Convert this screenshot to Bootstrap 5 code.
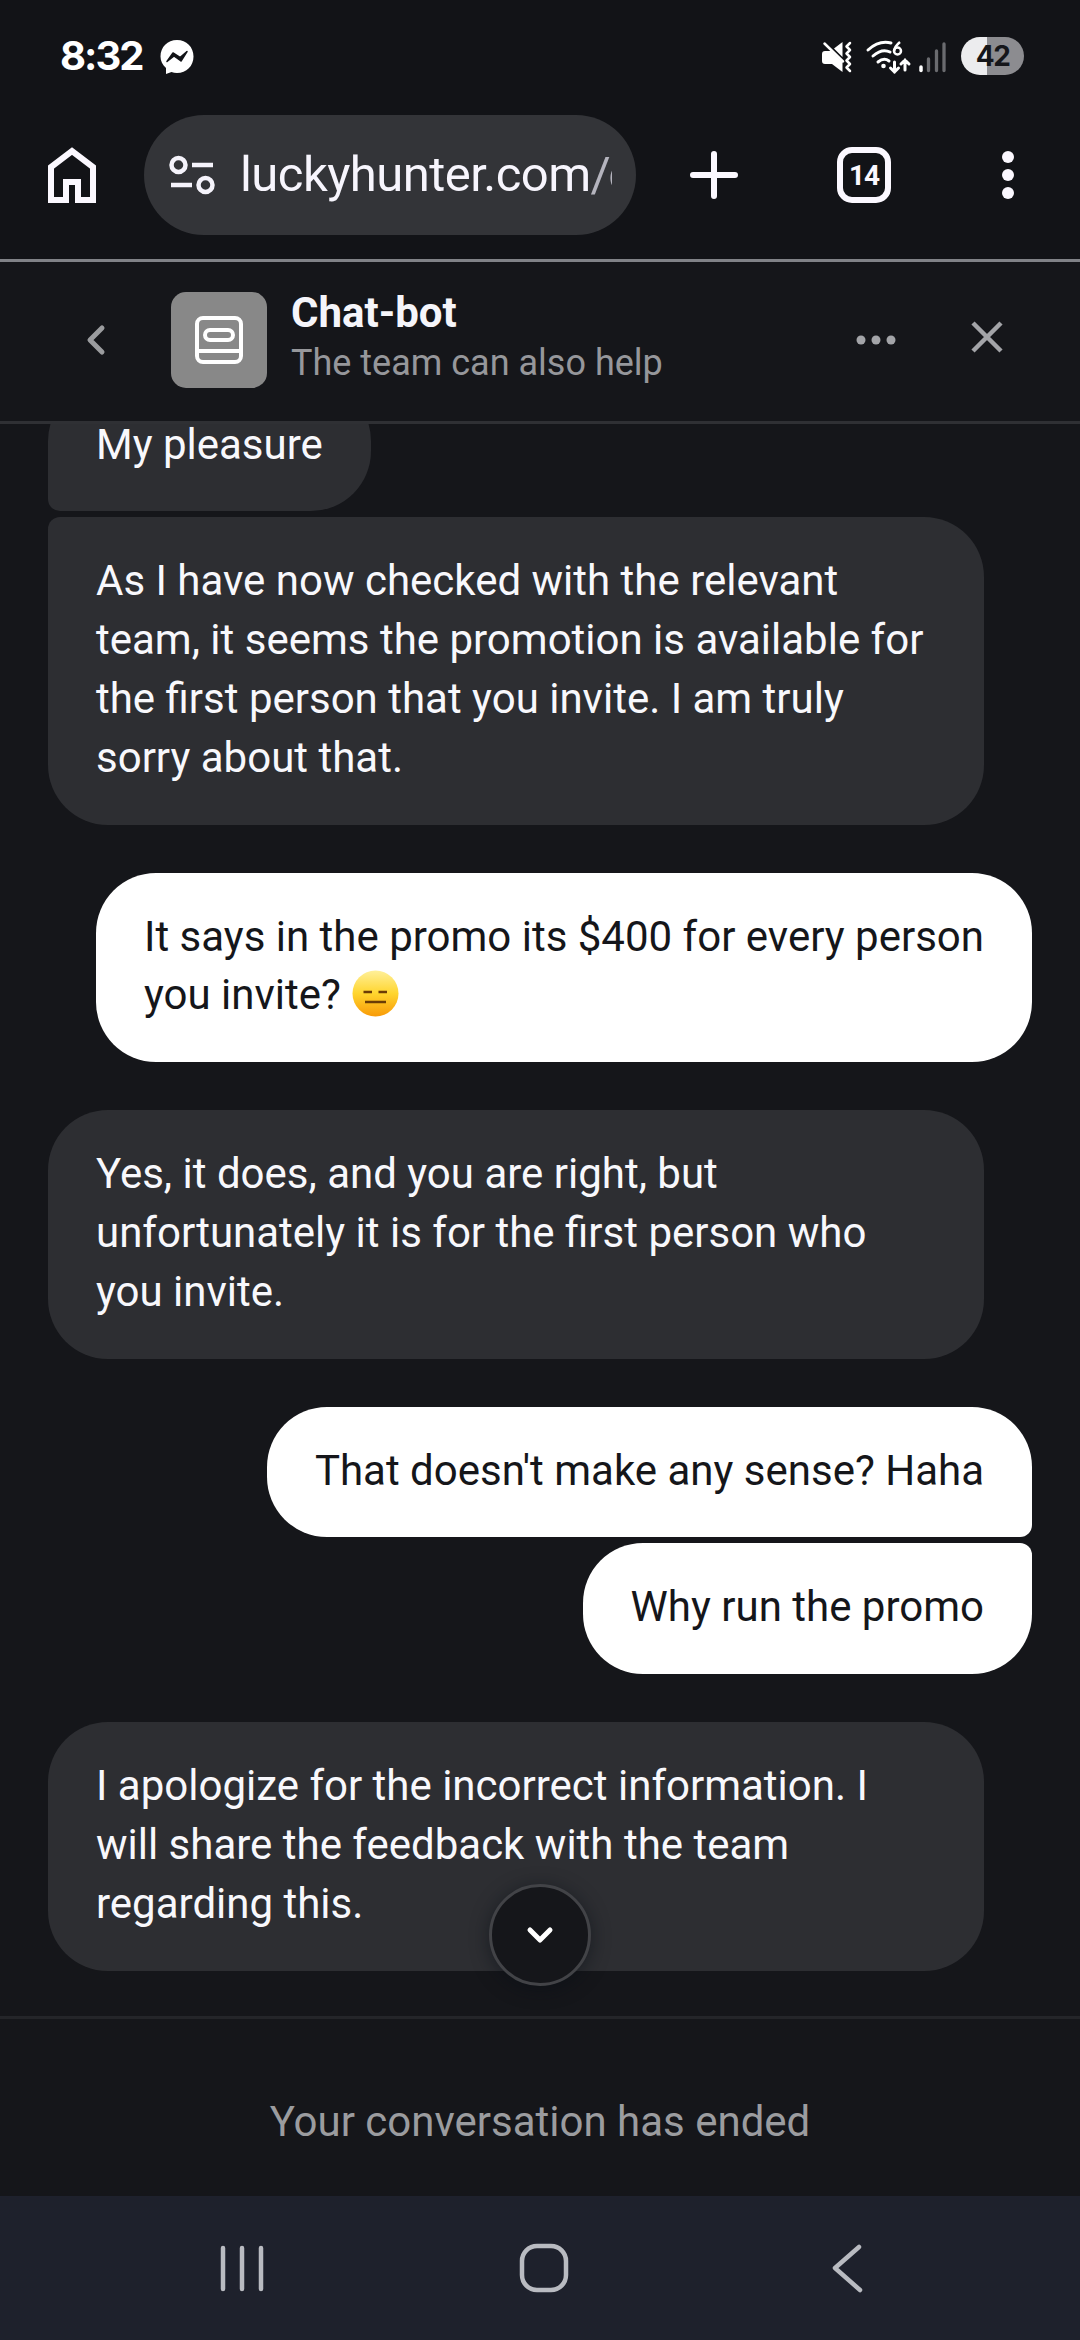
<!DOCTYPE html>
<html lang="en">
<head>
<meta charset="utf-8">
<meta name="viewport" content="width=device-width, initial-scale=1">
<title>Chat-bot</title>
<link href="https://cdn.jsdelivr.net/npm/bootstrap@5.3.0/dist/css/bootstrap.min.css" rel="stylesheet">
<style>
body{width:1080px;height:2340px;background:#121317;color:#fff;font-family:Roboto,sans-serif;overflow:hidden}
svg{display:block;flex:none;fill:none;overflow:visible}
.status-row{height:115px;padding:0 56px 0 60px}
.clock{font:700 40px/56px Inter,sans-serif;letter-spacing:-2px;width:83px;height:56px;margin-top:28px}
.messenger{margin:40px 0 0 17px}
.sys-icons{margin-top:37px}
.battery{width:63px;height:38px;margin-left:13px;border-radius:19px;background:linear-gradient(90deg,#ececee 26px,#8c8c90 26px);color:#15161a;font:700 28px/39px Inter,sans-serif;letter-spacing:-1.5px}
.browser-row{height:147px;border-bottom:3px solid #808287;padding:0 60px 24px 48px}
.omnibox{width:492px;height:120px;border-radius:60px;background:#333438;margin-left:48px;padding-left:25px}
.url-text{font-size:49px;line-height:64px;letter-spacing:-.55px;width:372px;margin-left:25px;white-space:nowrap;color:#f7f5fd}
.url-path{color:#b5b4be;letter-spacing:-2.5px}
.plus-icon{margin-left:54px}
.tab-count{width:54px;height:56px;margin-left:99px;border:6px solid #fbf8ff;border-radius:15px;font:700 28px/45px Roboto,sans-serif;letter-spacing:-1px;color:#fbf8ff}
.chat-head{height:162px;padding-bottom:3px;border-bottom:3px solid #2f3034;background:#15161a}
.back-icon{margin-left:86px}
.avatar-box{width:96px;height:96px;margin-left:65px;border-radius:15px;background:#888}
.head-text{margin:-4px 0 0 24px}
.bot-name{font-weight:700;font-size:42px;line-height:50px;color:#f5f5fa}
.bot-sub{font-size:36px;line-height:50px;color:#96979b}
.close-icon{margin:-6px 77px 0 75px}
.thread{height:1592px;background:#15161a;padding:0 48px 45.5px;overflow:hidden}
.bubble{font-size:42px;line-height:58.8px;padding:35px 48px 37px;border-radius:60px;max-width:936px;flex:none}
.from-bot{background:#2d2e32;color:#f8f8fc;align-self:flex-start}
.from-me{background:#fff;color:#15161a;align-self:flex-end}
.gap-s{margin-top:6px}
.gap-l{margin-top:48px}
.tail-bl{border-bottom-left-radius:12px}
.tail-tl{border-top-left-radius:12px}
.tail-br{border-bottom-right-radius:12px}
.tail-tr{border-top-right-radius:12px}
.emoji{vertical-align:-8px;margin-left:1px}
.to-bottom{left:489px;bottom:30px;width:102px;height:102px;border:3px solid #424347;background:#15161a;box-shadow:0 3px 18px rgba(10,14,22,.55)}
.ended{height:180px;border-top:3px solid #242529;background:#15161a;color:#9b9c9f;font-size:42px;line-height:59px;padding-top:73px}
.sys-nav{height:144px;background:#1e212c}
</style>
</head>
<body class="d-flex flex-column">
<header>
  <div class="status-row d-flex align-items-start">
    <div class="clock">8:32</div>
    <svg class="messenger" width="34" height="34" viewBox="0 0 34 34"><path fill="#fff" d="M17 0C26.500 0 33.500 7 33.500 16.500S26.500 33 17 33q-3-.1-5.500-.9L6 34V28C2.500 25 .5 21 .5 16.500.5 7 7.500 0 17 0Z"/><path d="m7 21.500 6-8.500 7 4.500 7-6-6 9.500-7-5Z" fill="#121317" stroke="#121317" stroke-width="1.500" stroke-linejoin="round"/></svg>
    <div class="sys-icons d-flex ms-auto">
      <svg width="126" height="38" viewBox="0 0 126 38">
        <path fill="#fff" d="M0 17q0-3 3-3h6l11.500 11v10L10 27H3q-3 0-3-3ZM20.500 5v15L12 11.500Z"/>
        <path d="m2.500 6.500 18.500 18" stroke="#fff" stroke-width="2.500" stroke-linecap="round"/>
        <path d="m28 6-3.500 3.500L28 13l-3.500 3.500L28 20l-3.500 3.500L28 27l-3.500 3.500L28 34" stroke="#fff" stroke-width="2.500" stroke-linecap="round" stroke-linejoin="round"/>
        <g stroke="#fff" stroke-width="3" stroke-linecap="round"><path d="M46 13q11-10 23-7M51 19q9-8 17-4M56 25q6-5 11-1"/><path d="M72.500 25v10m-4-4 4 4 4-4M83 33V23m-4 4 4-4 4 4"/></g>
        <circle cx="61.500" cy="29" r="2.300" fill="#fff"/>
        <path d="M78 5q-5 4-6 9" stroke="#fff" stroke-width="2.500"/><circle cx="75.500" cy="14" r="3.500" stroke="#fff" stroke-width="2.500"/>
        <path d="M99 30v3.500" stroke="#fff" stroke-width="3.500" stroke-linecap="round"/><path d="M106.500 22v11.500M114.500 14v19.500M122 7v26.500" stroke="#6a6b6f" stroke-width="3.300" stroke-linecap="round"/>
      </svg>
      <div class="battery text-center">42</div>
    </div>
  </div>
  <div class="browser-row d-flex align-items-center">
    <svg width="48" height="56" viewBox="0 0 48 56"><path d="M3 53V20L24 4l21 16v33H30V35H18v18Z" stroke="#fbf8ff" stroke-width="6"/></svg>
    <div class="omnibox d-flex align-items-center">
      <svg width="46" height="38" viewBox="0 0 46 38"><g stroke="#f5f3fb" stroke-width="4.500"><circle cx="9.500" cy="9" r="7"/><circle cx="36.500" cy="29" r="7"/><path d="M23 9h21M2 29h21"/></g></svg>
      <div class="url-text overflow-hidden">luckyhunter.com<span class="url-path">/c</span></div>
    </div>
    <svg class="plus-icon" width="48" height="50" viewBox="0 0 48 50"><path d="M24 4v42M3 25h42" stroke="#fbf8ff" stroke-width="6" stroke-linecap="round"/></svg>
    <div class="tab-count text-center">14</div>
    <svg class="ms-auto" width="24" height="48" viewBox="0 0 24 48"><g fill="#fbf8ff"><circle cx="12" cy="6" r="6"/><circle cx="12" cy="24" r="6"/><circle cx="12" cy="42" r="6"/></g></svg>
  </div>
</header>
<section class="chat-head d-flex align-items-center">
  <svg class="back-icon" width="20" height="30" viewBox="0 0 20 30"><path d="M16 3 4 15l12 12" stroke="#9b9c9f" stroke-width="5" stroke-linecap="round" stroke-linejoin="round"/></svg>
  <div class="avatar-box d-flex align-items-center justify-content-center"><svg width="48" height="48" viewBox="0 0 48 48"><g stroke="#fff" stroke-width="4"><rect x="2" y="2" width="44" height="44" rx="6"/><path d="M2 35h44"/><rect x="10" y="14" width="28" height="10" rx="5"/></g></svg></div>
  <div class="head-text"><div class="bot-name">Chat-bot</div><div class="bot-sub">The team can also help</div></div>
  <svg class="ms-auto" width="40" height="10" viewBox="0 0 40 10"><g fill="#a3a4a8"><circle cx="5" cy="5" r="4.500"/><circle cx="20" cy="5" r="4.500"/><circle cx="35" cy="5" r="4.500"/></g></svg>
  <svg class="close-icon" width="32" height="32" viewBox="0 0 32 32"><path d="m2 2 28 28M30 2 2 30" stroke="#a3a4a8" stroke-width="4.500"/></svg>
</section>
<main class="thread d-flex flex-column justify-content-end position-relative">
  <div class="bubble from-bot tail-bl">My pleasure</div>
  <div class="bubble from-bot gap-s tail-tl">As I have now checked with the relevant team, it seems the promotion is available for the first person that you invite. I am truly sorry about that.</div>
  <div class="bubble from-me gap-l">It says in the promo its $400 for every person you invite? <svg class="emoji d-inline-block" width="47" height="47" viewBox="0 0 47 47"><defs><linearGradient id="face" x2="0" y2="1"><stop stop-color="#fff09a"/><stop offset=".5" stop-color="#ffd52e"/><stop offset="1" stop-color="#f89a08"/></linearGradient></defs><circle cx="23.500" cy="23.500" r="23" fill="url(#face)"/><path d="M11.500 22H20M26.500 22H35M13 32h21" stroke="#6b3c05" stroke-width="2.500"/></svg></div>
  <div class="bubble from-bot gap-l">Yes, it does, and you are right, but unfortunately it is for the first person who you invite.</div>
  <div class="bubble from-me gap-l tail-br">That doesn't make any sense? Haha</div>
  <div class="bubble from-me gap-s tail-tr">Why run the promo</div>
  <div class="bubble from-bot gap-l">I apologize for the incorrect information. I will share the feedback with the team regarding this.</div>
  <div class="to-bottom rounded-circle position-absolute d-flex align-items-center justify-content-center"><svg width="26" height="16" viewBox="0 0 26 16"><path d="m3 3 10 10L23 3" stroke="#fff" stroke-width="5" stroke-linecap="round" stroke-linejoin="round"/></svg></div>
</main>
<section class="ended text-center">Your conversation has ended</section>
<nav class="sys-nav">
  <svg width="1080" height="144" viewBox="0 0 1080 144"><g stroke="#b9bbc1" stroke-width="4.500" stroke-linecap="round" stroke-linejoin="round"><path d="M223 52v41M242 52v41M261 52v41M859 51l-24 21 25 22"/><rect x="522" y="50" width="44" height="44" rx="15"/></g></svg>
</nav>
<script src="https://cdn.jsdelivr.net/npm/bootstrap@5.3.0/dist/js/bootstrap.bundle.min.js"></script>
</body>
</html>
